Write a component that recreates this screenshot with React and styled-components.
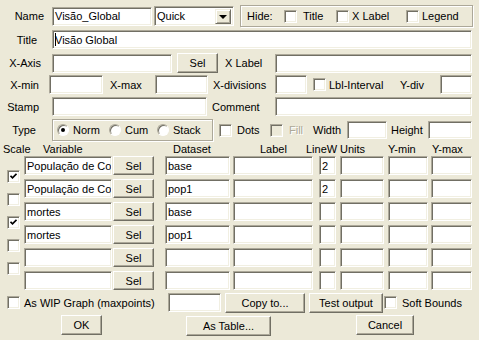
import React from 'react';
import styled, { createGlobalStyle } from 'styled-components';

const GlobalStyle = createGlobalStyle`
  body {
    margin: 0;
    background: #ece9d8;
    font-family: "Liberation Sans", Arial, sans-serif;
    font-size: 11px;
    color: #000;
  }
`;

const Dialog = styled.div`
  width: 479px;
  height: 340px;
  box-sizing: border-box;
  padding-top: 5px;
  display: flex;
  flex-direction: column;
  overflow: hidden;
  background: #ece9d8;
`;

const Row = styled.div`
  display: flex;
  align-items: center;
  flex-shrink: 0;
  height: ${p => p.h || 19}px;
  margin-top: ${p => p.mt || 0}px;
  padding-left: ${p => p.pl || 0}px;
`;

const Label = styled.span`
  flex-shrink: 0;
  box-sizing: border-box;
  width: ${p => p.w}px;
  text-align: ${p => p.align || 'left'};
  padding-right: ${p => p.pr || 0}px;
  padding-left: ${p => p.pl || 0}px;
  margin-left: ${p => p.ml || 0}px;
  white-space: nowrap;
  color: ${p => (p.disabled ? '#aca899' : '#000')};
  text-shadow: ${p => (p.disabled ? '1px 1px 0 #fff' : 'none')};
`;

// sunken edit box
const Field = styled.div`
  flex-shrink: 0;
  box-sizing: border-box;
  width: ${p => p.w}px;
  height: ${p => p.h || 19}px;
  margin-left: ${p => p.ml || 0}px;
  background: #fff;
  border: 1px solid;
  border-color: #aca899 #fff #fff #aca899;
  box-shadow: inset 1px 1px #716f64, inset -1px -1px #f1efe2;
  padding: 0 2px;
  display: flex;
  align-items: center;
  white-space: nowrap;
  overflow: hidden;
`;

const Caret = styled.span`
  display: inline-block;
  width: 1px;
  height: 13px;
  background: #000;
  margin-right: -1px;
`;

const Button = styled.div`
  flex-shrink: 0;
  box-sizing: border-box;
  width: ${p => p.w}px;
  height: ${p => p.h || 20}px;
  margin-left: ${p => p.ml || 0}px;
  margin-top: ${p => p.mt || 0}px;
  background: #ece9d8;
  border: 1px solid;
  border-color: #fff #716f64 #716f64 #fff;
  box-shadow: inset -1px -1px #aca899;
  display: flex;
  align-items: center;
  justify-content: center;
  white-space: nowrap;
`;

const Combo = styled(Field)`
  padding-right: 2px;
  justify-content: space-between;
`;

const ComboArrow = styled.div`
  box-sizing: border-box;
  width: 16px;
  height: 15px;
  background: #ece9d8;
  border: 1px solid;
  border-color: #f1efe2 #716f64 #716f64 #f1efe2;
  box-shadow: inset 1px 1px #fff, inset -1px -1px #aca899;
  display: flex;
  align-items: center;
  justify-content: center;

  &::after {
    content: '';
    border-left: 4px solid transparent;
    border-right: 4px solid transparent;
    border-top: 4px solid #000;
    margin-top: 1px;
  }
`;

const Group = styled.div`
  flex-shrink: 0;
  box-sizing: border-box;
  width: ${p => p.w}px;
  height: ${p => p.h}px;
  margin-left: ${p => p.ml || 0}px;
  padding-left: ${p => p.pl || 0}px;
  border: 1px solid #aca899;
  box-shadow: inset 1px 1px #fff, 1px 1px #fff;
  display: flex;
  align-items: center;
`;

const CheckItem = styled.span`
  flex-shrink: 0;
  display: flex;
  align-items: center;
  gap: ${p => (p.gap === undefined ? 5 : p.gap)}px;
  width: ${p => (p.w ? `${p.w}px` : 'auto')};
  margin-left: ${p => p.ml || 0}px;
  white-space: nowrap;
`;

const Box = styled.span`
  flex-shrink: 0;
  box-sizing: border-box;
  width: 13px;
  height: 13px;
  background: ${p => (p.disabled ? '#ece9d8' : '#fff')};
  border: 1px solid;
  border-color: #aca899 #fff #fff #aca899;
  box-shadow: inset 1px 1px #716f64, inset -1px -1px #f1efe2;
  display: flex;
  align-items: center;
  justify-content: center;
`;

const Radio = styled.span`
  flex-shrink: 0;
  box-sizing: border-box;
  width: 12px;
  height: 12px;
  border-radius: 50%;
  background: #fff;
  border: 1px solid;
  border-color: #aca899 #fff #fff #aca899;
  box-shadow: inset 1px 1px #716f64;
  display: flex;
  align-items: center;
  justify-content: center;

  &::after {
    content: '';
    display: ${p => (p.on ? 'block' : 'none')};
    width: 4px;
    height: 4px;
    border-radius: 50%;
    background: #000;
  }
`;

const Header = styled.div`
  display: flex;
  height: 13px;
  margin-top: 1px;
  padding-left: 3px;
  align-items: center;
  flex-shrink: 0;
`;

const Table = styled.div`
  display: flex;
  margin-top: 1px;
  flex-shrink: 0;
`;

const ScaleCol = styled.div`
  width: 24px;
  box-sizing: border-box;
  padding: 14px 0 0 7px;
  display: flex;
  flex-direction: column;
  gap: 10px;
`;

const Rows = styled.div`
  display: flex;
  flex-direction: column;
  gap: 4px;
`;

const Check = ({ on, disabled }) => (
  <Box disabled={disabled}>
    {on && (
      <svg width="7" height="7" viewBox="0 0 7 7">
        <polyline points="0.5,2.8 2.5,4.8 6.5,0.8" fill="none" stroke="#000" strokeWidth="1.7" />
      </svg>
    )}
  </Box>
);

const series = [
  { v: 'População de Co', d: 'base', w: '2' },
  { v: 'População de Co', d: 'pop1', w: '2' },
  { v: 'mortes', d: 'base', w: '' },
  { v: 'mortes', d: 'pop1', w: '' },
  { v: '', d: '', w: '' },
  { v: '', d: '', w: '' },
];

const scales = [true, false, true, false, false];

const headers = [
  ['Scale', 40], ['Variable', 130], ['Dataset', 87], ['Label', 46],
  ['LineW', 34], ['Units', 48], ['Y-min', 44], ['Y-max', 40],
];

export default function App() {
  return (
    <>
      <GlobalStyle />
      <Dialog>
        <Row h={22}>
          <Label w={52} align="right" pr={8}>Name</Label>
          <Field w={100}>Visão_Global</Field>
          <Combo w={80} h={20} ml={2}>
            Quick
            <ComboArrow />
          </Combo>
          <Group w={233} h={22} ml={6} pl={6}>
            <Label w={37}>Hide:</Label>
            <CheckItem w={52} gap={6}><Check />Title</CheckItem>
            <CheckItem w={70} gap={3}><Check />X Label</CheckItem>
            <CheckItem gap={3}><Check />Legend</CheckItem>
          </Group>
        </Row>

        <Row mt={3}>
          <Label w={52} align="right" pr={15}>Title</Label>
          <Field w={420}><Caret />Visão Global</Field>
        </Row>

        <Row h={20} mt={4}>
          <Label w={52} align="right" pr={11}>X-Axis</Label>
          <Field w={120}></Field>
          <Button w={41} ml={5}>Sel</Button>
          <Label w={50} ml={7}>X Label</Label>
          <Field w={197}></Field>
        </Row>

        <Row mt={2}>
          <Label w={49} align="right" pr={10}>X-min</Label>
          <Field w={54}></Field>
          <Label w={52} pl={7}>X-max</Label>
          <Field w={53}></Field>
          <Label w={67} pl={5}>X-divisions</Label>
          <Field w={32}></Field>
          <CheckItem w={87} ml={6} gap={3}><Check />Lbl-Interval</CheckItem>
          <Label w={40}>Y-div</Label>
          <Field w={32}></Field>
        </Row>

        <Row mt={3}>
          <Label w={52} align="right" pr={13}>Stamp</Label>
          <Field w={155}></Field>
          <Label w={68} pl={5}>Comment</Label>
          <Field w={197}></Field>
        </Row>

        <Row h={22} mt={3}>
          <Label w={52} align="right" pr={16}>Type</Label>
          <Group w={161} h={22} pl={4}>
            <CheckItem w={52} gap={4}><Radio on />Norm</CheckItem>
            <CheckItem w={48} gap={4}><Radio />Cum</CheckItem>
            <CheckItem gap={4}><Radio />Stack</CheckItem>
          </Group>
          <CheckItem w={51} ml={6} gap={5}><Check />Dots</CheckItem>
          <CheckItem w={43} gap={6}>
            <Check disabled />
            <Label disabled>Fill</Label>
          </CheckItem>
          <Label w={34}>Width</Label>
          <Field w={40} h={18}></Field>
          <Label w={41} pl={4}>Height</Label>
          <Field w={44} h={18}></Field>
        </Row>

        <Header>
          {headers.map(([t, w]) => (
            <Label key={t} w={w}>{t}</Label>
          ))}
        </Header>

        <Table>
          <ScaleCol>
            {scales.map((on, i) => (
              <Check key={i} on={on} />
            ))}
          </ScaleCol>
          <Rows>
            {series.map((s, i) => (
              <Row key={i}>
                <Field w={88}>{s.v}</Field>
                <Button w={41} h={19} ml={1}>Sel</Button>
                <Field w={65} ml={11}>{s.d}</Field>
                <Field w={80} ml={3}></Field>
                <Field w={17} ml={6}>{s.w}</Field>
                <Field w={44} ml={4}></Field>
                <Field w={40} ml={4}></Field>
                <Field w={41} ml={3}></Field>
              </Row>
            ))}
          </Rows>
        </Table>

        <Row h={21} mt={2} pl={7}>
          <Check />
          <Label w={148} pl={4}>As WIP Graph (maxpoints)</Label>
          <Field w={53}></Field>
          <Button w={80} ml={4}>Copy to...</Button>
          <Button w={74} ml={4}>Test output</Button>
          <CheckItem ml={1} gap={5}><Check />Soft Bounds</CheckItem>
        </Row>

        <Row h={21} mt={1}>
          <Button w={41} ml={61}>OK</Button>
          <Button w={85} ml={84} mt={2}>As Table...</Button>
          <Button w={58} ml={85}>Cancel</Button>
        </Row>
      </Dialog>
    </>
  );
}
